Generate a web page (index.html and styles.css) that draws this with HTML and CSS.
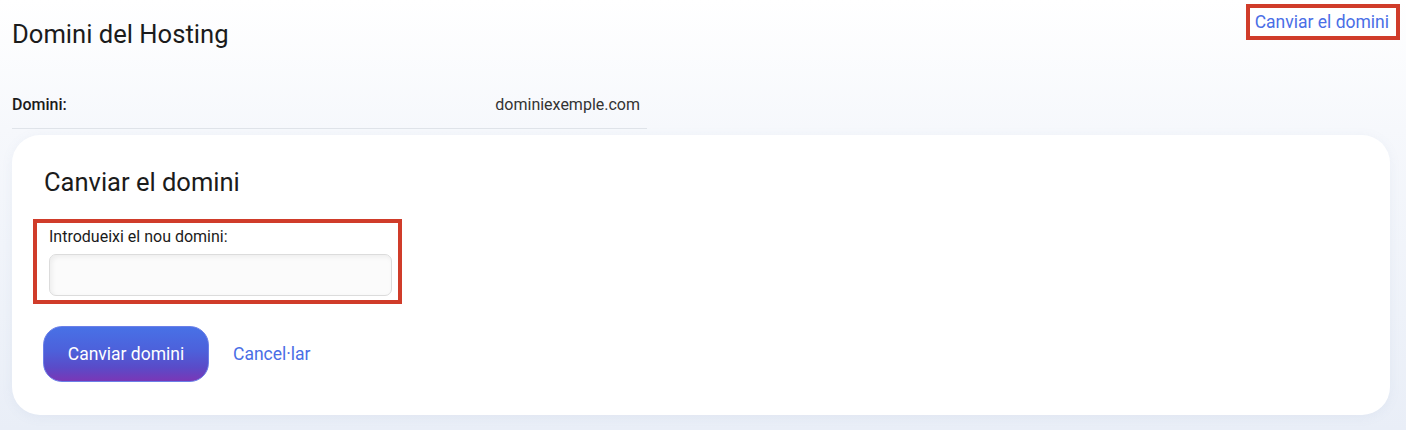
FILE: index.html
```html
<!DOCTYPE html>
<html lang="ca">
<head>
	<meta charset="UTF-8">
	<meta name="viewport" content="width=device-width, initial-scale=1.0">
	<title>Domini del Hosting</title>
	<link rel="stylesheet" href="styles.css">
</head>
<body>
	<div class="page">
		<header class="page__header">
			<h1 class="page__title">Domini del Hosting</h1>
			<a class="page__link mark" href="#">Canviar el domini</a>
		</header>

		<div class="info">
			<div class="info__row">
				<span class="info__label">Domini:</span>
				<span class="info__value">dominiexemple.com</span>
			</div>
		</div>

		<section class="card">
			<h2 class="card__title">Canviar el domini</h2>
			<div class="field mark">
				<label class="field__label" for="input__domain">Introdueixi el nou domini:</label>
				<input class="field__input" type="text" id="input__domain">
			</div>
			<div class="card__actions">
				<button class="btn__submit">Canviar domini</button>
				<a class="btn__cancel" href="#">Cancel·lar</a>
			</div>
		</section>
	</div>
</body>
</html>
```

FILE: styles.css
```css
*{
	margin: 0;
	padding: 0;
	box-sizing: border-box;
}
body{
	height: 100vh;
	font-family: Roboto, "Liberation Sans", sans-serif;
	color: #1b1b1b;
	background: linear-gradient(180deg, #ffffff 0%, #f6f8fc 30%, #e9eef7 100%);
}

.mark{
	border: 4px solid #d03c2a;
}

.page__header{
	display: flex;
	justify-content: space-between;
	align-items: flex-start;
	padding: 4px 6px 0 12px;
}
.page__title{
	margin-top: 15px;
	font-size: 25.6px;
	line-height: 30px;
	font-weight: 400;
}
.page__link{
	padding: 4px 7px 4px 5px;
	font-size: 17.5px;
	line-height: 20px;
	color: #4a6ee6;
	text-decoration: none;
	background-color: #fff;
}

.info{
	width: 635px;
	margin: 32px 0 0 12px;
}
.info__row{
	display: flex;
	justify-content: space-between;
	align-items: baseline;
	padding: 12px 7px 11px 0;
	line-height: 24px;
	border-bottom: 1px solid #e0e4ea;
}
.info__label{
	font-size: 16px;
	font-weight: 500;
}
.info__value{
	font-size: 16px;
	color: #333;
}

.card{
	margin: 6px 16px 0 12px;
	padding: 32px 32px 33px 32px;
	background-color: #fff;
	border-radius: 28px;
	box-shadow: 0 2px 12px rgba(120, 140, 180, 0.08);
}
.card__title{
	font-size: 25.5px;
	line-height: 30px;
	font-weight: 400;
}

.field{
	display: flex;
	flex-direction: column;
	width: 369px;
	margin: 22px 0 0 -11px;
	padding: 4px 6px 4px 12px;
}
.field__label{
	font-size: 16px;
	line-height: 20px;
}
.field__input{
	margin-top: 7px;
	height: 42px;
	border: 1px solid #dcdcdc;
	border-radius: 7px;
	background-color: #fbfbfb;
	box-shadow: inset 2px 2px 5px rgba(0, 0, 0, 0.06);
	outline: none;
}

.card__actions{
	display: flex;
	align-items: center;
	gap: 24px;
	margin-top: 22px;
}
.btn__submit{
	width: 166px;
	height: 56px;
	margin-left: -1px;
	font-family: inherit;
	font-size: 17.5px;
	color: #fff;
	border: 1px solid #6b7fe8;
	border-radius: 19px;
	background: linear-gradient(180deg, #4871e6 0%, #4d60da 45%, #5a4bc8 75%, #7a37b6 100%);
	cursor: pointer;
}
.btn__cancel{
	font-size: 17.5px;
	color: #4a6ee6;
	text-decoration: none;
}
```
